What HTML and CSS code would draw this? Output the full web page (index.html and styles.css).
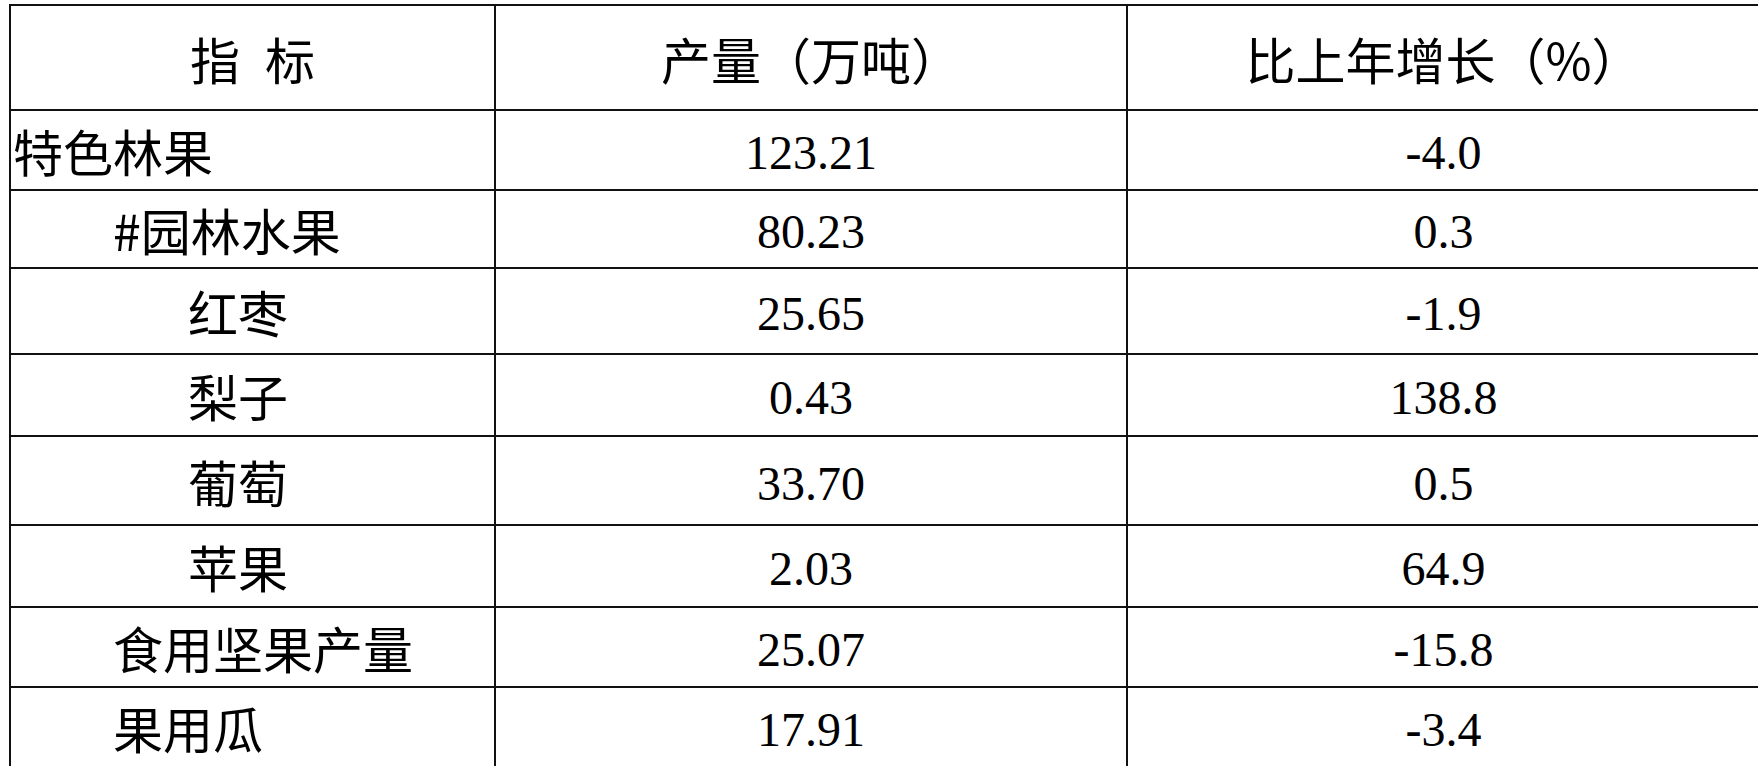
FILE: index.html
```html
<!DOCTYPE html>
<html lang="zh-CN">
<head>
<meta charset="utf-8">
<title>特色林果产量</title>
<link rel="stylesheet" href="styles.css">
</head>
<body>
<table class="stats">
  <colgroup>
    <col class="c-name">
    <col class="c-val">
    <col class="c-pct">
  </colgroup>
  <thead>
    <tr class="h-head">
      <th class="spaced">指 标</th>
      <th>产量（万吨）</th>
      <th>比上年增长（%）</th>
    </tr>
  </thead>
  <tbody>
    <tr class="h1"><td class="name lv0">特色林果</td><td class="num">123.21</td><td class="num">-4.0</td></tr>
    <tr class="h2"><td class="name lv1">#园林水果</td><td class="num">80.23</td><td class="num">0.3</td></tr>
    <tr class="h3"><td class="name lv2">红枣</td><td class="num">25.65</td><td class="num">-1.9</td></tr>
    <tr class="h4"><td class="name lv2">梨子</td><td class="num">0.43</td><td class="num">138.8</td></tr>
    <tr class="h5"><td class="name lv2">葡萄</td><td class="num">33.70</td><td class="num">0.5</td></tr>
    <tr class="h6"><td class="name lv2">苹果</td><td class="num">2.03</td><td class="num">64.9</td></tr>
    <tr class="h7"><td class="name lv1">食用坚果产量</td><td class="num">25.07</td><td class="num">-15.8</td></tr>
    <tr class="h8"><td class="name lv1">果用瓜</td><td class="num">17.91</td><td class="num">-3.4</td></tr>
  </tbody>
</table>
</body>
</html>
```

FILE: styles.css
```css
html, body {
  margin: 0;
  padding: 0;
  background: #ffffff;
  overflow: hidden;
}

body {
  padding: 4px 0 0 9px;
  width: 1758px;
  height: 766px;
  box-sizing: border-box;
}

.stats {
  border-collapse: collapse;
  table-layout: fixed;
  width: 1750px;
  color: #000;
  font-family: "Noto Sans CJK SC", "Noto Sans", sans-serif;
  font-size: 50px;
}

.c-name { width: 485px; }
.c-val { width: 632px; }
.c-pct { width: 633px; }

.stats th,
.stats td {
  border: 2px solid #111;
  padding: 0;
  line-height: 1.2;
  vertical-align: middle;
  white-space: nowrap;
  overflow: hidden;
}

.stats th {
  font-weight: 400;
  text-align: center;
}

.stats th.spaced {
  word-spacing: 14px;
}

.stats .name {
  text-align: left;
}

.stats .lv0 { padding-left: 2px; }
.stats .lv1 { padding-left: 102px; }
.stats .lv2 { padding-left: 177px; }

.stats .num {
  text-align: center;
  font-family: "Liberation Serif", "Times New Roman", serif;
  font-size: 48px;
  padding-top: 6px;
}

.h-head { height: 105px; }
.h1 { height: 80px; }
.h2 { height: 78px; }
.h3 { height: 86px; }
.h4 { height: 82px; }
.h5 { height: 89px; }
.h6 { height: 82px; }
.h7 { height: 80px; }
.h8 { height: 80px; }
```
